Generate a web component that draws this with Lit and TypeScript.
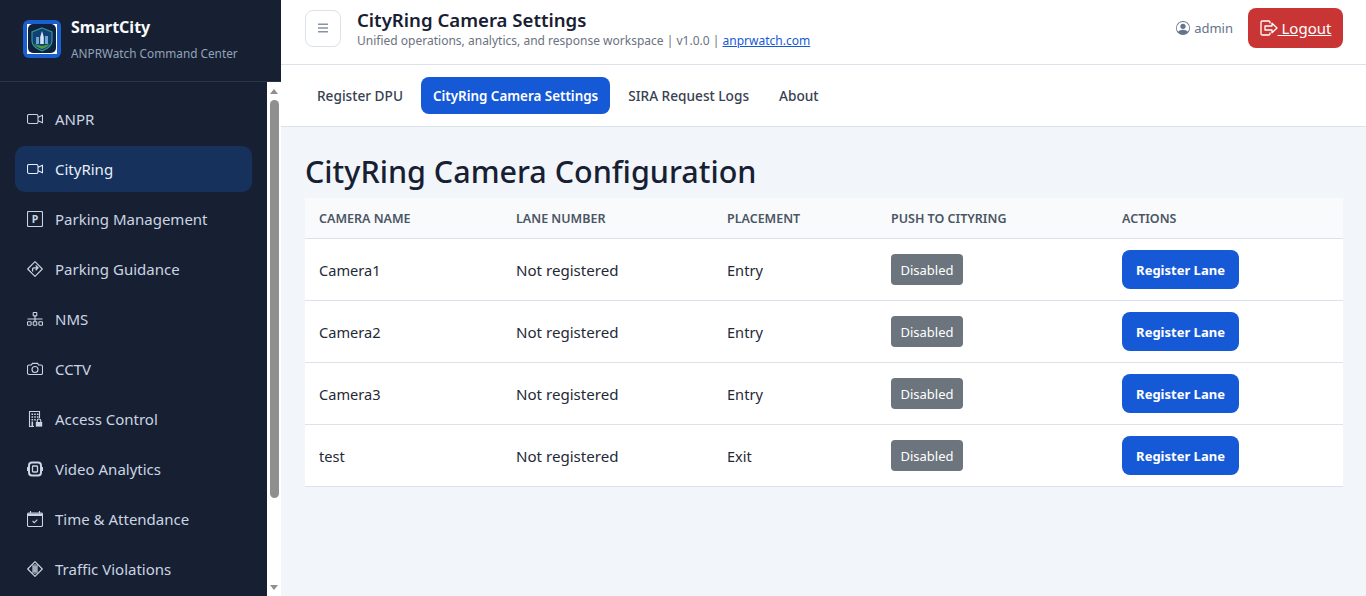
import { LitElement, css, html, svg } from 'lit';
import { customElement } from 'lit/decorators.js';

const video = svg`<rect x="0.5" y="3.5" width="10.5" height="9" rx="1.5"/><path d="M11 6.2l4.5-2v7.6l-4.5-2"/>`;

const navItems = [
  { label: 'ANPR', icon: video },
  { label: 'CityRing', icon: video, active: true },
  {
    label: 'Parking Management',
    icon: svg`<rect x="0.5" y="0.5" width="15" height="15" rx="1"/><text x="8" y="11.8" text-anchor="middle" class="glyph">P</text>`,
  },
  {
    label: 'Parking Guidance',
    icon: svg`<path d="M8 .7l7.3 7.3L8 15.3.7 8z" stroke-linejoin="round"/><path d="M5.6 10.6V8a1.2 1.2 0 0 1 1.2-1.2h4M8.6 4.4l2.4 2.4-2.4 2.4" stroke-width="1.3"/>`,
  },
  {
    label: 'NMS',
    icon: svg`<rect x="6.2" y="1.5" width="3.6" height="3.4" rx=".6"/><rect x=".5" y="10.8" width="3.6" height="3.4" rx=".6"/><rect x="6.2" y="10.8" width="3.6" height="3.4" rx=".6"/><rect x="11.9" y="10.8" width="3.6" height="3.4" rx=".6"/><path d="M8 4.9v5.9M.5 8h15"/>`,
  },
  {
    label: 'CCTV',
    icon: svg`<path d="M2 4h2.4l1-1.6h5.2l1 1.6H14a1.5 1.5 0 0 1 1.5 1.5v6.5A1.5 1.5 0 0 1 14 13.5H2A1.5 1.5 0 0 1 .5 12V5.5A1.5 1.5 0 0 1 2 4z"/><circle cx="8" cy="8.5" r="3"/>`,
  },
  {
    label: 'Access Control',
    icon: svg`<path d="M7 15.5H2.5v-15h10V7"/><path class="dots" d="M4.5 2.5h1.6v1.6H4.5zM7.2 2.5h1.6v1.6H7.2zM9.9 2.5h1.6v1.6H9.9zM4.5 5.2h1.6v1.6H4.5zM7.2 5.2h1.6v1.6H7.2zM9.9 5.2h1.6v1.6H9.9zM4.5 7.9h1.6v1.6H4.5zM7.2 7.9h1.6v1.6H7.2zM4.5 10.6h1.6V15H4.5z"/><path class="dots" d="M8.8 11h6.4v4.6H8.8z"/><path d="M10.2 11V9.8a1.8 1.8 0 0 1 3.6 0V11"/>`,
  },
  {
    label: 'Video Analytics',
    icon: svg`<rect x="2" y="1.5" width="12" height="13" rx="3" stroke-width="2"/><rect x="5.5" y="5" width="5" height="6" rx=".8" stroke-width="1.3"/><path d="M.7 6v4M15.3 6v4" stroke-width="1.4"/>`,
  },
  {
    label: 'Time & Attendance',
    icon: svg`<rect x="0.5" y="2" width="15" height="13.5" rx="1.2"/><path class="dots" d="M1 2.5h14V5H1z"/><path d="M3.5 0v2.5M12.5 0v2.5"/><path d="M5.6 10l1.7 1.7 3-3"/>`,
  },
  {
    label: 'Traffic Violations',
    icon: svg`<path d="M8 .7l7.3 7.3L8 15.3.7 8z" stroke-linejoin="round"/><path d="M6 3.5v9M10 3.5v9M6 6h4M6 8h4M6 10h4M8 3v10"/>`,
  },
];

const cameras = [
  { name: 'Camera1', placement: 'Entry' },
  { name: 'Camera2', placement: 'Entry' },
  { name: 'Camera3', placement: 'Entry' },
  { name: 'test', placement: 'Exit' },
];

const tabs = ['Register DPU', 'CityRing Camera Settings', 'SIRA Request Logs', 'About'];

@customElement('app-root')
export class AppRoot extends LitElement {
  static styles = css`
    :host {
      display: flex;
      height: 100vh;
      overflow: hidden;
      font-family: 'Noto Sans', 'Open Sans', sans-serif;
      background: #f2f5f9;
      color: #172033;
    }
    .sidebar {
      flex: 0 0 281px;
      display: flex;
      flex-direction: column;
      background: #172033;
      min-height: 0;
    }
    .brand {
      flex: 0 0 82px;
      display: flex;
      align-items: center;
      gap: 10px;
      padding: 0 23px 4px;
      box-sizing: border-box;
      border-bottom: 1px solid #2b3548;
    }
    .logo {
      width: 38px;
      height: 38px;
      display: block;
    }
    .brand-name {
      font-size: 16px;
      font-weight: 700;
      color: #f8fafc;
      line-height: 22px;
      margin-bottom: 7px;
    }
    .brand-sub {
      font-size: 11.8px;
      color: #94a3b8;
      line-height: 16px;
    }
    .side-body {
      flex: 1;
      display: flex;
      min-height: 0;
    }
    nav {
      flex: 1;
      display: flex;
      flex-direction: column;
      gap: 4px;
      padding: 14px 15px;
      overflow: hidden;
    }
    .nav-item {
      flex: 0 0 46px;
      display: flex;
      align-items: center;
      gap: 12px;
      padding: 0 12px;
      border-radius: 10px;
      color: #cbd5e1;
      font-size: 15px;
    }
    .nav-item.active {
      background: #16325c;
      color: #e8eef7;
    }
    .nav-item svg {
      width: 16px;
      height: 16px;
      flex: none;
      fill: none;
      stroke: currentColor;
      stroke-width: 1.1;
    }
    .nav-item svg .glyph {
      fill: currentColor;
      stroke: none;
      font-size: 10.5px;
      font-weight: 700;
    }
    .nav-item svg .dots {
      fill: currentColor;
      stroke: none;
    }
    .scrollbar {
      flex: 0 0 14px;
      display: flex;
      flex-direction: column;
      align-items: center;
      background: #fff;
      padding: 0 2px;
      box-sizing: border-box;
    }
    .arrow {
      flex: 0 0 17px;
      display: flex;
      align-items: center;
      justify-content: center;
    }
    .arrow.up {
      flex-basis: 18px;
    }
    .arrow::before {
      content: '';
      border-left: 4.5px solid transparent;
      border-right: 4.5px solid transparent;
    }
    .arrow.up::before {
      border-bottom: 5px solid #8f8f8f;
    }
    .arrow.down::before {
      border-top: 5px solid #8f8f8f;
    }
    .thumb {
      flex: 0 0 398px;
      width: 9px;
      border-radius: 5px;
      background: #8f8f8f;
    }
    .spacer {
      flex: 1;
    }
    main {
      flex: 1;
      min-width: 0;
      display: flex;
      flex-direction: column;
    }
    header {
      flex: 0 0 65px;
      box-sizing: border-box;
      display: flex;
      align-items: center;
      padding: 0 23px 8px 24px;
      background: #fff;
      border-bottom: 1px solid #dbe2ea;
    }
    .menu-btn {
      width: 36px;
      height: 37px;
      margin-right: 16px;
      box-sizing: border-box;
      border: 1px solid #dbe2ea;
      border-radius: 8px;
      background: #fff;
      display: flex;
      align-items: center;
      justify-content: center;
      padding: 0;
    }
    .menu-btn svg {
      width: 12px;
      height: 12px;
      stroke: #8b929c;
      stroke-width: 1.6;
      fill: none;
    }
    .titles {
      flex: 1;
    }
    .titles h2 {
      margin: 0;
      font-size: 18.6px;
      font-weight: 600;
      line-height: 24px;
      color: #172033;
    }
    .titles p {
      margin: 1px 0 0;
      font-size: 12.03px;
      line-height: 16px;
      color: #6b7280;
    }
    .titles a {
      color: #1559d6;
      text-decoration: underline;
    }
    .user {
      display: flex;
      align-items: center;
      gap: 4px;
      font-size: 13px;
      color: #64748b;
      margin-right: 15px;
    }
    .user svg {
      width: 14px;
      height: 14px;
      fill: #64748b;
    }
    .logout {
      width: 95px;
      height: 40px;
      box-sizing: border-box;
      display: flex;
      align-items: center;
      justify-content: center;
      background: #c93535;
      color: #fff;
      border-radius: 8px;
      font-size: 15px;
      text-decoration: underline;
    }
    .logout svg {
      width: 18px;
      height: 16px;
      fill: none;
      stroke: #fff;
      stroke-width: 1.3;
    }
    .tabs {
      flex: 0 0 62px;
      box-sizing: border-box;
      display: flex;
      align-items: center;
      gap: 6px;
      padding: 0 24px 1px;
      background: #fff;
      border-bottom: 1px solid #dbe2ea;
    }
    .tab {
      height: 37px;
      box-sizing: border-box;
      display: flex;
      align-items: center;
      padding: 1px 12px 0;
      border-radius: 8px;
      font-size: 13.65px;
      font-weight: 500;
      color: #374151;
    }
    .tab.active {
      background: #1559d6;
      color: #fff;
      font-size: 13.4px;
      font-weight: 600;
    }
    .content {
      flex: 1;
      padding: 23px 23px 0 24px;
    }
    h1 {
      margin: 0 0 6px;
      font-size: 30.5px;
      font-weight: 500;
      line-height: 42px;
      color: #172033;
    }
    table {
      width: 1038px;
      table-layout: fixed;
      border-collapse: collapse;
      background: #fff;
    }
    .c1 {
      width: 197px;
    }
    .c2 {
      width: 211px;
    }
    .c3 {
      width: 164px;
    }
    .c4 {
      width: 231px;
    }
    .c5 {
      width: 235px;
    }
    th {
      height: 40px;
      padding: 1px 14px 0;
      box-sizing: border-box;
      text-align: left;
      font-size: 12.5px;
      font-weight: 600;
      color: #4b5563;
      background: #f8fafc;
      border-bottom: 1px solid #dbe2ea;
    }
    td {
      height: 62px;
      padding: 0 14px;
      box-sizing: border-box;
      font-size: 14.6px;
      color: #1f2937;
      border-bottom: 1px solid #dbe2ea;
    }
    td.text {
      padding-top: 2px;
    }
    td.lane {
      font-size: 15.1px;
    }
    .badge {
      display: inline-flex;
      align-items: center;
      justify-content: center;
      width: 72px;
      height: 31px;
      box-sizing: border-box;
      padding-top: 1px;
      border-radius: 4px;
      background: #6c757d;
      color: #fff;
      font-size: 13px;
      vertical-align: middle;
    }
    .register {
      display: block;
      width: 117px;
      height: 39px;
      padding: 2px 0 0;
      border: 0;
      border-radius: 8px;
      background: #1559d6;
      color: #fff;
      font-family: inherit;
      font-size: 13px;
      font-weight: 700;
    }
  `;

  render() {
    return html`
      <aside class="sidebar">
        <div class="brand">
          <svg class="logo" viewBox="0 0 38 38" aria-hidden="true">
            <rect width="38" height="38" rx="6" fill="#1a5fd0" />
            <rect x="4" y="4" width="30" height="30" fill="#fff" />
            <rect x="5" y="4" width="28" height="29" rx="5" fill="#10203f" />
            <path d="M19 8l10 4v9c0 5-5 8-10 10-5-2-10-5-10-10v-9z" fill="#123f74" stroke="#2f9a8f" stroke-width="1.2" />
            <path d="M11 24c3 3 5 4 8 5 3-1 5-2 8-5l-8 2z" fill="#4c9a3f" />
            <path d="M19 11l1.8 6v7h-3.6v-7z" fill="#d7e6f5" />
            <path d="M13 17h3v7h-3zM22 16h3v8h-3z" fill="#6fa7d8" />
          </svg>
          <div>
            <div class="brand-name">SmartCity</div>
            <div class="brand-sub">ANPRWatch Command Center</div>
          </div>
        </div>
        <div class="side-body">
          <nav>
            ${navItems.map(
              (item) => html`
                <div class="nav-item ${item.active ? 'active' : ''}">
                  <svg viewBox="0 0 16 16" aria-hidden="true">${item.icon}</svg>
                  <span>${item.label}</span>
                </div>
              `
            )}
          </nav>
          <div class="scrollbar">
            <div class="arrow up"></div>
            <div class="thumb"></div>
            <div class="spacer"></div>
            <div class="arrow down"></div>
          </div>
        </div>
      </aside>
      <main>
        <header>
          <button class="menu-btn" aria-label="Menu">
            <svg viewBox="0 0 12 12"><path d="M1 2.2h10M1 6h10M1 9.8h10" /></svg>
          </button>
          <div class="titles">
            <h2>CityRing Camera Settings</h2>
            <p>Unified operations, analytics, and response workspace | v1.0.0 | <a href="#">anprwatch.com</a></p>
          </div>
          <div class="user">
            <svg viewBox="0 0 16 16" aria-hidden="true">
              <path d="M11 6a3 3 0 1 1-6 0 3 3 0 0 1 6 0z" />
              <path
                fill-rule="evenodd"
                d="M0 8a8 8 0 1 1 16 0A8 8 0 0 1 0 8zm8-7a7 7 0 0 0-5.468 11.37C3.242 11.226 4.805 10 8 10s4.757 1.225 5.468 2.37A7 7 0 0 0 8 1z"
              />
            </svg>
            admin
          </div>
          <div class="logout">
            <svg viewBox="0 0 18 16" aria-hidden="true">
              <path d="M10 3.5V2.2A1.2 1.2 0 0 0 8.8 1H2.2A1.2 1.2 0 0 0 1 2.2v11.6A1.2 1.2 0 0 0 2.2 15h6.6a1.2 1.2 0 0 0 1.2-1.2v-1.3" />
              <path d="M5 6h7V3.2L17 8l-5 4.8V10H5z" stroke-linejoin="round" />
            </svg>
            <span>&nbsp;Logout</span>
          </div>
        </header>
        <div class="tabs">
          ${tabs.map(
            (tab, i) => html`<div class="tab ${i === 1 ? 'active' : ''}">${tab}</div>`
          )}
        </div>
        <div class="content">
          <h1>CityRing Camera Configuration</h1>
          <table>
            <colgroup>
              <col class="c1" />
              <col class="c2" />
              <col class="c3" />
              <col class="c4" />
              <col class="c5" />
            </colgroup>
            <thead>
              <tr>
                <th>CAMERA NAME</th>
                <th>LANE NUMBER</th>
                <th>PLACEMENT</th>
                <th>PUSH TO CITYRING</th>
                <th>ACTIONS</th>
              </tr>
            </thead>
            <tbody>
              ${cameras.map(
                (cam) => html`
                  <tr>
                    <td class="text">${cam.name}</td>
                    <td class="text lane">Not registered</td>
                    <td class="text">${cam.placement}</td>
                    <td><span class="badge">Disabled</span></td>
                    <td><button class="register">Register Lane</button></td>
                  </tr>
                `
              )}
            </tbody>
          </table>
        </div>
      </main>
    `;
  }
}
